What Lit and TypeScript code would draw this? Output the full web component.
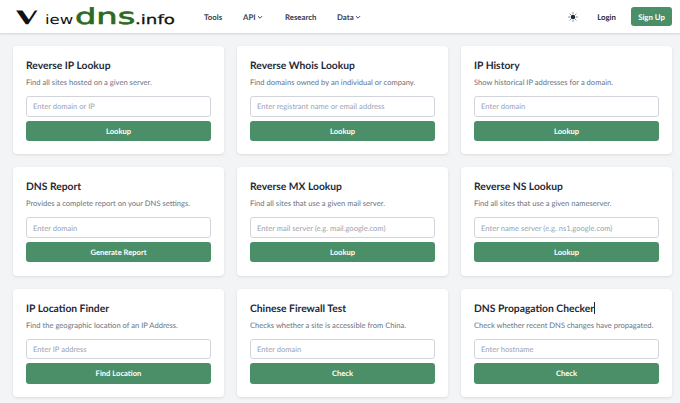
import { LitElement, html, css, svg } from "lit";
import { customElement } from "lit/decorators.js";

const TOOLS = [
  { title: "Reverse IP Lookup", desc: "Find all sites hosted on a given server.", ph: "Enter domain or IP", btn: "Lookup" },
  { title: "Reverse Whois Lookup", desc: "Find domains owned by an individual or company.", ph: "Enter registrant name or email address", btn: "Lookup" },
  { title: "IP History", desc: "Show historical IP addresses for a domain.", ph: "Enter domain", btn: "Lookup" },
  { title: "DNS Report", desc: "Provides a complete report on your DNS settings.", ph: "Enter domain", btn: "Generate Report" },
  { title: "Reverse MX Lookup", desc: "Find all sites that use a given mail server.", ph: "Enter mail server (e.g. mail.google.com)", btn: "Lookup" },
  { title: "Reverse NS Lookup", desc: "Find all sites that use a given nameserver.", ph: "Enter name server (e.g. ns1.google.com)", btn: "Lookup" },
  { title: "IP Location Finder", desc: "Find the geographic location of an IP Address.", ph: "Enter IP address", btn: "Find Location" },
  { title: "Chinese Firewall Test", desc: "Checks whether a site is accessible from China.", ph: "Enter domain", btn: "Check" },
  { title: "DNS Propagation Checker", desc: "Check whether recent DNS changes have propagated.", ph: "Enter hostname", btn: "Check" },
];

const chevron = svg`<svg class="chev" viewBox="0 0 10 10" width="6" height="6"><path d="M1.5 3.5 5 7l3.5-3.5" fill="none" stroke="#374151" stroke-width="1.6"/></svg>`;

@customElement("app-root")
export class AppRoot extends LitElement {
  static styles = css`
    :host {
      display: block;
      height: 403px;
      overflow: hidden;
      background: #f3f4f6;
      font-family: Lato, "Noto Sans", sans-serif;
      text-rendering: geometricPrecision;
      color: #1f2937;
    }
    header {
      height: 33px;
      background: #fff;
      box-shadow: 0 1px 2px rgba(0, 0, 0, 0.14);
      display: flex;
      align-items: center;
      padding: 0 8px 0 13px;
    }
    .logo {
      width: 177px;
      height: 24px;
      display: flex;
      align-items: baseline;
      font-family: "DejaVu Sans", sans-serif;
      color: #111;
      white-space: nowrap;
      line-height: 24px;
    }
    .logo span { display: inline-block; transform-origin: 0 100%; }
    .logo .v {
      font-family: "Liberation Serif", serif;
      font-weight: 700;
      font-size: 24px;
      width: 32px;
      transform: scaleX(1.6);
      clip-path: inset(6px 0 0 0);
    }
    .logo .iew { font-size: 13px; width: 30px; transform: scaleX(1.27); }
    .logo .dns {
      font-size: 22px;
      color: #2a6a22;
      width: 60px;
      transform: scaleX(1.53);
      -webkit-text-stroke: 0.6px #2a6a22;
    }
    .logo .info { font-size: 13px; transform: scaleX(1.4); -webkit-text-stroke: 0.3px #111; }
    nav { display: flex; align-items: center; margin-left: 14px; font-size: 7.8px; font-weight: 700; color: #374151; }
    nav span { display: inline-flex; align-items: center; gap: 1px; }
    nav span:nth-child(1) { width: 39px; }
    nav span:nth-child(2) { width: 42px; }
    nav span:nth-child(3) { width: 52px; }
    .right { margin-left: auto; display: flex; align-items: center; font-size: 7.8px; font-weight: 700; }
    .sun { margin-right: 19px; display: block; }
    .right .login { margin-right: 15px; color: #1f2937; }
    .signup {
      background: #4a8f68;
      color: #fff;
      height: 19px;
      width: 41px;
      border-radius: 3px;
      display: flex;
      align-items: center;
      justify-content: center;
    }
    main {
      display: grid;
      grid-template-columns: repeat(3, 211px);
      column-gap: 13px;
      row-gap: 13px;
      padding: 13px 8px 0 13px;
    }
    .card {
      background: #fff;
      border-radius: 4px;
      box-shadow: 0 1px 3px rgba(0, 0, 0, 0.1);
      padding: 13px;
      height: 108.3px;
      box-sizing: border-box;
    }
    h2 { margin: 0; font-size: 10.3px; line-height: 14px; font-weight: 700; color: #1f2937; white-space: nowrap; }
    p { margin: 3px 0 0; font-size: 7.6px; line-height: 12px; color: #6b7280; white-space: nowrap; }
    .input {
      margin-top: 8px;
      height: 20.6px;
      box-sizing: border-box;
      border: 1px solid #d1d5db;
      border-radius: 3px;
      padding: 0 6px;
      display: flex;
      align-items: center;
      font-size: 7.6px;
      color: #9ca3af;
      white-space: nowrap;
    }
    .btn {
      margin-top: 4px;
      height: 20.6px;
      background: #4a8f68;
      border-radius: 3px;
      color: #fff;
      font-size: 7.6px;
      font-weight: 700;
      display: flex;
      align-items: center;
      justify-content: center;
    }
    .caret { display: inline-block; width: 1px; height: 12px; background: #1f2937; vertical-align: -2px; }
  `;

  render() {
    return html`
      <header>
        <div class="logo"><span class="v">V</span><span class="iew">iew</span><span class="dns">dns</span><span class="info">.info</span></div>
        <nav>
          <span>Tools</span>
          <span>API ${chevron}</span>
          <span>Research</span>
          <span>Data ${chevron}</span>
        </nav>
        <div class="right">
          <svg class="sun" viewBox="0 0 24 24" width="10" height="10" fill="#1f2937">
            <circle cx="12" cy="12" r="5.5" />
            <path d="M12 1v3M12 20v3M1 12h3M20 12h3M4.2 4.2l2 2M17.8 17.8l2 2M4.2 19.8l2-2M17.8 6.2l2-2" stroke="#1f2937" stroke-width="2" />
          </svg>
          <span class="login">Login</span>
          <span class="signup">Sign Up</span>
        </div>
      </header>
      <main>
        ${TOOLS.map(
          (t, i) => html`
            <section class="card">
              <h2>${t.title}${i === 8 ? html`<span class="caret"></span>` : ""}</h2>
              <p>${t.desc}</p>
              <div class="input">${t.ph}</div>
              <div class="btn">${t.btn}</div>
            </section>
          `
        )}
      </main>
    `;
  }
}
